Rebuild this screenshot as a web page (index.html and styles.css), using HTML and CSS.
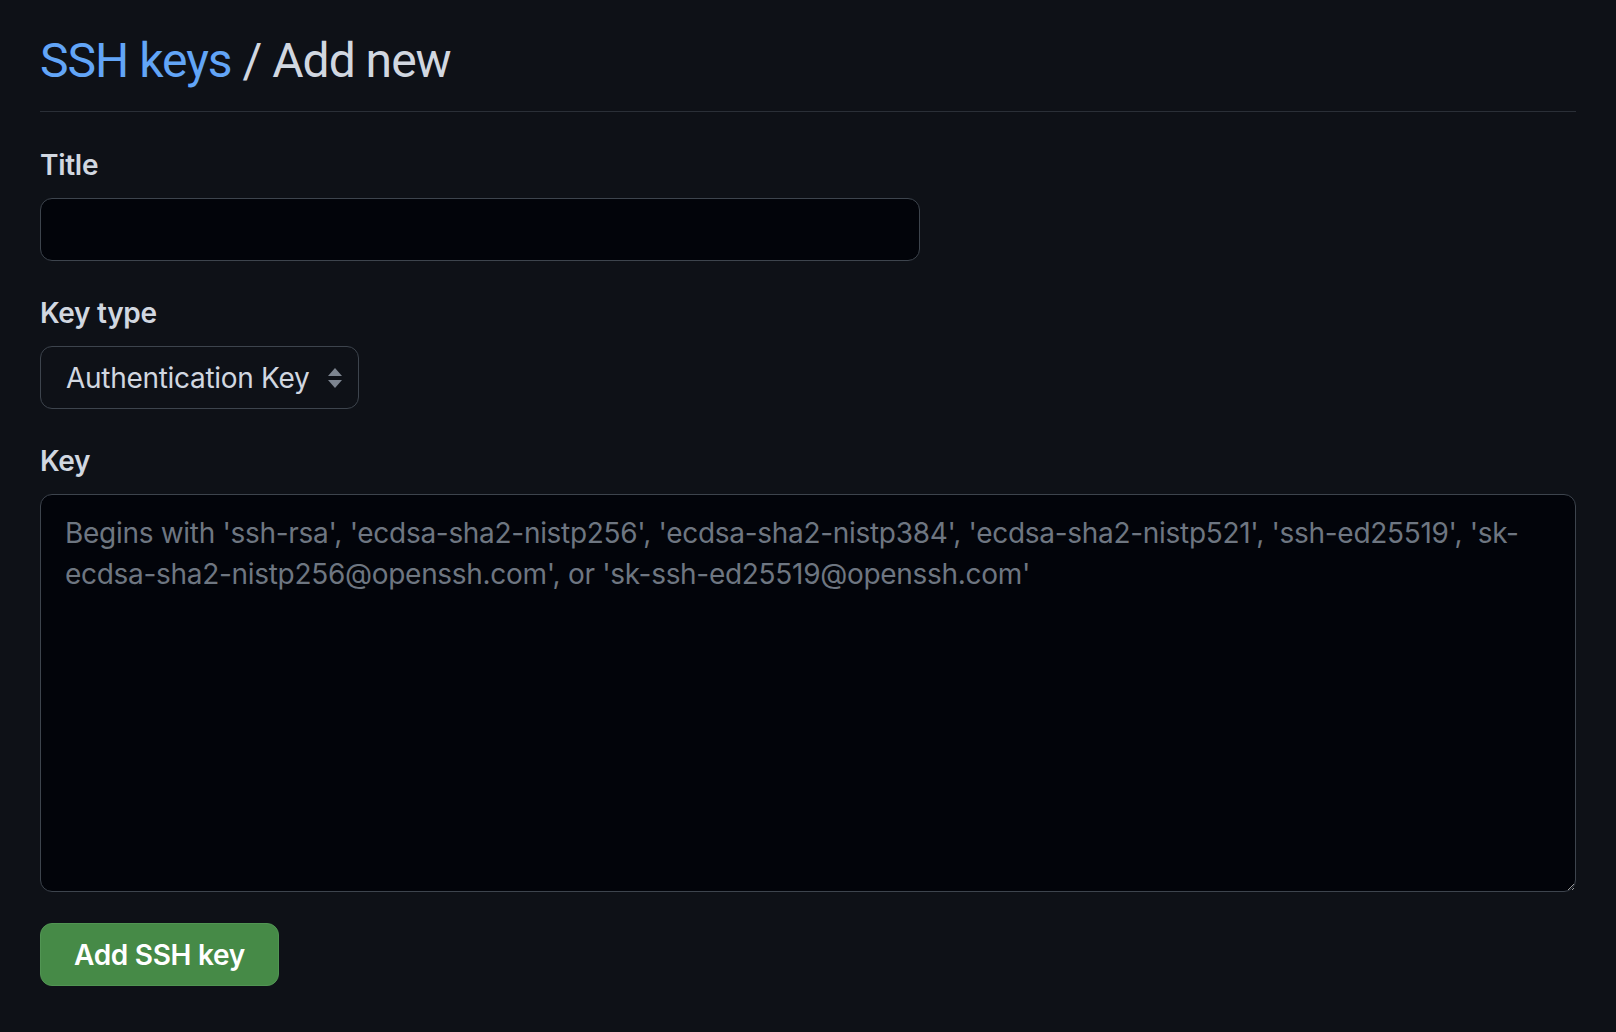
FILE: index.html
```html
<!DOCTYPE html>
<html lang="en">
<head>
  <meta charset="UTF-8">
  <title>Add new SSH key</title>
  <link rel="stylesheet" href="styles.css">
</head>
<body>
  <div class="page">
    <div class="subhead">
      <h1 class="subhead-heading"><a href="#">SSH keys</a> / Add new</h1>
    </div>

    <form class="key-form">
      <div class="form-group">
        <label for="title">Title</label>
        <input type="text" id="title" class="form-control title-input">
      </div>

      <div class="form-group">
        <label for="key-type">Key type</label>
        <div class="select-wrap">
          <select id="key-type" class="form-select">
            <option>Authentication Key</option>
            <option>Signing Key</option>
          </select>
          <svg class="select-arrow" width="16" height="22" viewBox="0 0 16 22">
            <path d="M1 9 L8 1 L15 9 Z" fill="#7d8590"/>
            <path d="M1 13 L8 21 L15 13 Z" fill="#7d8590"/>
          </svg>
        </div>
      </div>

      <div class="form-group">
        <label for="key">Key</label>
        <textarea id="key" class="form-control key-input" placeholder="Begins with 'ssh-rsa', 'ecdsa-sha2-nistp256', 'ecdsa-sha2-nistp384', 'ecdsa-sha2-nistp521', 'ssh-ed25519', 'sk-ecdsa-sha2-nistp256@openssh.com', or 'sk-ssh-ed25519@openssh.com'"></textarea>
      </div>

      <button type="button" class="btn-primary">Add SSH key</button>
    </form>
  </div>
</body>
</html>
```

FILE: styles.css
```css
body {
  margin: 0;
  background-color: #0e1117;
  color: #d1d7e0;
  font-family: Inter, "Liberation Sans", sans-serif;
  letter-spacing: -0.3px;
}
.page {
  padding: 25px 40px 40px;
}
.subhead {
  padding-bottom: 14px;
  border-bottom: 1px solid #2a2f37;
  margin-bottom: 32px;
}
.subhead-heading {
  margin: 0;
  font-family: Roboto, Inter, sans-serif;
  font-size: 48px;
  line-height: 72px;
  font-weight: 400;
  letter-spacing: -1px;
  color: #d1d7e0;
}
.subhead-heading a {
  color: #62a5f7;
  text-decoration: none;
}
.form-group {
  margin-bottom: 31px;
}
.form-group label {
  display: block;
  font-size: 28px;
  line-height: 42px;
  font-weight: 600;
  color: #d1d7e0;
  margin-bottom: 12px;
}
.form-control {
  display: block;
  box-sizing: border-box;
  background-color: #02040a;
  border: 1px solid #3d444d;
  border-radius: 12px;
  color: #d1d7e0;
  font-family: inherit;
  font-size: 28px;
  letter-spacing: inherit;
  outline: none;
}
.title-input {
  width: 880px;
  height: 63px;
  padding: 0 24px;
}
.key-input {
  width: 100%;
  height: 398px;
  padding: 18px 24px;
  line-height: 41px;
  resize: vertical;
}
.key-input::placeholder {
  color: #6e7681;
}
.select-wrap {
  display: inline-flex;
  align-items: center;
  box-sizing: border-box;
  height: 63px;
  border: 1px solid #3d444d;
  border-radius: 12px;
  background-color: #0e1117;
  padding-right: 15px;
}
.form-select {
  appearance: none;
  border: none;
  background: transparent;
  color: #d1d7e0;
  font-family: inherit;
  font-size: 28px;
  letter-spacing: inherit;
  padding: 0 0 0 25px;
  outline: none;
}
.select-arrow {
  margin-left: 17px;
}
.btn-primary {
  display: block;
  box-sizing: border-box;
  height: 63px;
  padding: 0 33px;
  background-color: #468a47;
  border: 1px solid #519553;
  border-radius: 12px;
  color: #ffffff;
  font-family: inherit;
  font-size: 28px;
  font-weight: 600;
  letter-spacing: inherit;
}
```
